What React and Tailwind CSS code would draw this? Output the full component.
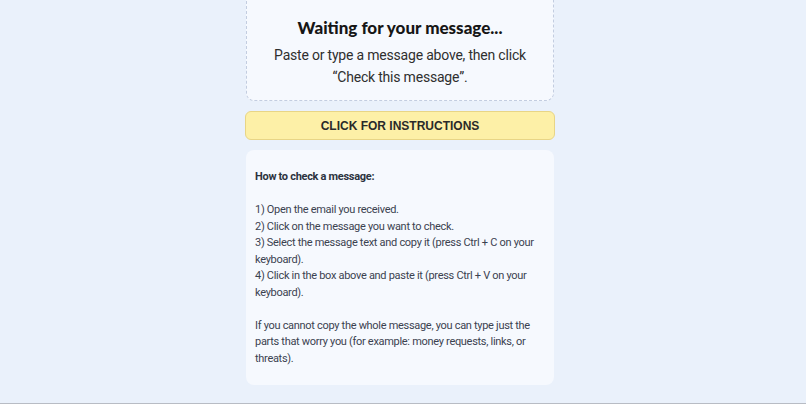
export default function App() {
  return (
    <div className="bg-[#eaf1fb] flex flex-col items-center overflow-hidden border-b border-[#b8bcc4]" style={{ height: 404 }}>
      <div className="w-[308px] ml-[-6px] flex flex-col">
        <div className="mt-[-12px] h-[113px] rounded-b-[8px] border border-dashed border-[#c3cde0] bg-[#f6f9fe] flex flex-col items-center pt-[28px]">
          <div className="text-[17px] font-black text-[#161616] leading-[22px]" style={{ fontFamily: 'Lato, sans-serif' }}>Waiting for your message...</div>
          <div className="mt-[5px] text-[14px] tracking-[-0.2px] leading-[22px] text-[#2f2f2f] text-center whitespace-nowrap" style={{ fontFamily: 'Roboto, sans-serif' }}>
            Paste or type a message above, then click
            <br />
            “Check this message”.
          </div>
        </div>
        <button className="mt-[10px] mx-[-1px] h-[29px] rounded-[6px] border border-[#e8d586] bg-[#fdf0a7] text-[12px] font-bold text-[#2a2a2a]" style={{ fontFamily: '"Liberation Sans", Arial, sans-serif' }}>
          CLICK FOR INSTRUCTIONS
        </button>
        <div className="mt-[10px] rounded-[8px] bg-[#f6f9fe] px-[9px] pt-[19px] pb-[18px] text-[11px] tracking-[-0.3px] leading-[16.5px] text-[#3b4250] whitespace-nowrap" style={{ fontFamily: 'Roboto, sans-serif' }}>
          <div className="font-bold text-[#2c3340]">How to check a message:</div>
          <div className="h-[16.5px]" />
          <div>1) Open the email you received.</div>
          <div>2) Click on the message you want to check.</div>
          <div>3) Select the message text and copy it (press Ctrl + C on your<br />keyboard).</div>
          <div>4) Click in the box above and paste it (press Ctrl + V on your<br />keyboard).</div>
          <div className="h-[16.5px]" />
          <div>If you cannot copy the whole message, you can type just the<br />parts that worry you (for example: money requests, links, or<br />threats).</div>
        </div>
      </div>
    </div>
  );
}
